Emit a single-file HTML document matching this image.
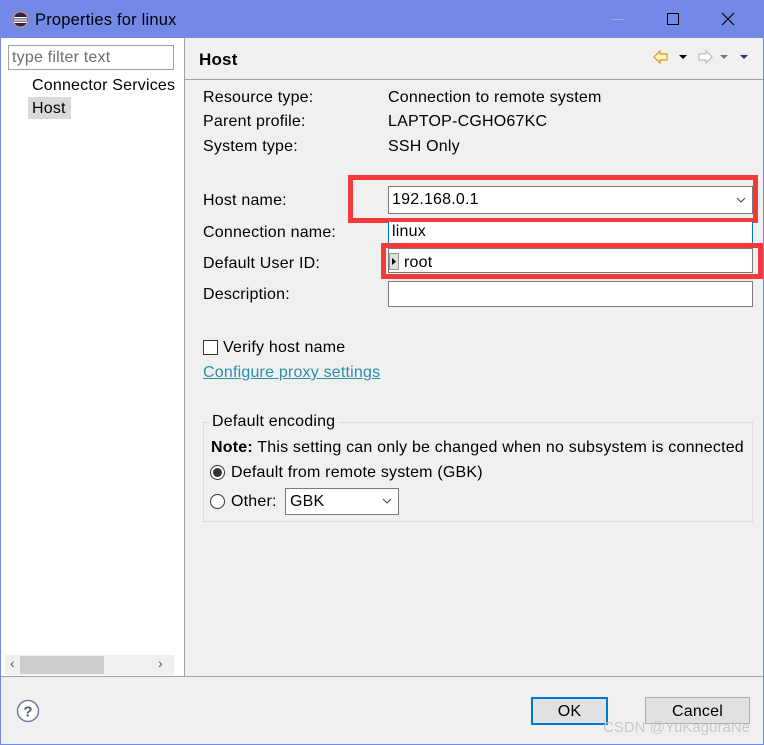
<!DOCTYPE html>
<html><head><meta charset="utf-8"><style>
*{margin:0;padding:0;box-sizing:border-box}
body{width:764px;height:745px;overflow:hidden;font-family:"Liberation Sans",sans-serif;font-size:16px;letter-spacing:0.2px;color:#000;background:#f0f0f0;position:relative}
.a{position:absolute;white-space:nowrap}
.t{line-height:20px;margin-top:2px}
.f{position:absolute;background:#fff;border:1px solid #7a7a7a}
.r{position:absolute;border:5px solid #f23a3a}
</style></head><body>
<div class="a" style="left:0;top:0;width:764px;height:745px;border:1px solid #7389e8"></div>
<div class="a" style="left:0;top:0;width:764px;height:38px;background:#7389e8"></div>
<svg class="a" style="left:12px;top:11px" width="17" height="17" viewBox="0 0 17 17"><circle cx="8.5" cy="8.5" r="7.5" fill="#2c2255" stroke="#e0a040" stroke-width="1"/><rect x="2" y="6" width="13" height="1.4" fill="#fff"/><rect x="2" y="8.3" width="13" height="1.4" fill="#fff"/><rect x="2" y="10.6" width="13" height="1.4" fill="#fff"/></svg>
<div class="a t" style="left:35px;top:8px;font-size:16.5px">Properties for linux</div>
<div class="a" style="left:611px;top:19px;width:13px;height:1px;background:#9aa8ee"></div>
<div class="a" style="left:667px;top:13px;width:12px;height:12px;border:1px solid #000"></div>
<svg class="a" style="left:721px;top:12px" width="14" height="14"><path d="M1 1L13 13M13 1L1 13" stroke="#000" stroke-width="1.2"/></svg>
<!-- left panel -->
<div class="a" style="left:1px;top:38px;width:184px;height:638px;background:#fff;border-right:1px solid #a0a0a0"></div>
<div class="f" style="left:8px;top:45px;width:166px;height:25px;border-color:#a0a0a0"></div>
<div class="a t" style="left:12px;top:46px;color:#6d6d6d">type filter text</div>
<div class="a t" style="left:32px;top:74px">Connector Services</div>
<div class="a" style="left:28px;top:97px;width:43px;height:22px;background:#d9d9d9"></div>
<div class="a t" style="left:32px;top:97px">Host</div>
<div class="a" style="left:5px;top:655px;width:169px;height:20px;background:#f0f0f0"></div>
<div class="a" style="left:20px;top:656px;width:84px;height:18px;background:#cdcdcd"></div>
<div class="a" style="left:10px;top:655px;font-size:14px;color:#555">&#8249;</div>
<div class="a" style="left:158px;top:655px;font-size:14px;color:#555">&#8250;</div>
<!-- header -->
<div class="a t" style="left:199px;top:48px;font-weight:bold;font-size:17px">Host</div>
<div class="a" style="left:185px;top:79px;width:578px;height:1px;background:#a0a0a0"></div>
<svg class="a" style="left:652px;top:48px" width="104" height="18"><path d="M2 9L8 3V6H15V12H8V15Z" fill="#fff3c0" stroke="#d89a20" stroke-width="1.2"/><path d="M27 7H35L31 11Z" fill="#000"/><path d="M60 9L54 3V6H47V12H54V15Z" fill="#fff" stroke="#bbb" stroke-width="1.2"/><path d="M68 7H76L72 11Z" fill="#777"/><path d="M88 7H96L92 11Z" fill="#4a2070"/></svg>
<!-- labels -->
<div class="a t" style="left:203px;top:86px">Resource type:</div>
<div class="a t" style="left:388px;top:86px">Connection to remote system</div>
<div class="a t" style="left:203px;top:110px">Parent profile:</div>
<div class="a t" style="left:388px;top:110px">LAPTOP-CGHO67KC</div>
<div class="a t" style="left:203px;top:135px">System type:</div>
<div class="a t" style="left:388px;top:135px">SSH Only</div>
<div class="a t" style="left:203px;top:189px">Host name:</div>
<div class="a t" style="left:203px;top:221px">Connection name:</div>
<div class="a t" style="left:203px;top:252px">Default User ID:</div>
<div class="a t" style="left:203px;top:283px">Description:</div>
<!-- fields -->
<div class="f" style="left:388px;top:186px;width:365px;height:28px"></div>
<div class="a t" style="left:392px;top:188px">192.168.0.1</div>
<svg class="a" style="left:736px;top:196px" width="10" height="8"><path d="M1 2L5 6L9 2" stroke="#444" fill="none"/></svg>
<div class="r" style="left:348px;top:175px;width:410px;height:48px"></div>
<div class="f" style="left:388px;top:222px;width:365px;height:26px;border-color:#0078d7;border-top:none"></div>
<div class="a t" style="left:392px;top:220px">linux</div>
<div class="f" style="left:388px;top:248px;width:365px;height:25px"></div>
<div class="a" style="left:389px;top:253px;width:10px;height:17px;background:#e0e0e0;border:1px solid #999"></div>
<svg class="a" style="left:391px;top:258px" width="6" height="7"><path d="M1 0L5 3.5L1 7Z" fill="#000"/></svg>
<div class="a t" style="left:404px;top:251px">root</div>
<div class="r" style="left:381px;top:243px;width:382px;height:36px"></div>
<div class="f" style="left:388px;top:281px;width:365px;height:26px"></div>
<!-- checkbox -->
<div class="a" style="left:203px;top:340px;width:15px;height:15px;background:#fff;border:1px solid #333"></div>
<div class="a t" style="left:223px;top:336px">Verify host name</div>
<div class="a t" style="left:203px;top:361px;color:#2a8fa8;text-decoration:underline">Configure proxy settings</div>
<!-- group -->
<div class="a" style="left:203px;top:422px;width:550px;height:100px;border:1px solid #dcdcdc"></div>
<div class="a t" style="left:209px;top:410px;background:#f0f0f0;padding:0 3px">Default encoding</div>
<div class="a t" style="left:211px;top:436px"><b>Note:</b> This setting can only be changed when no subsystem is connected</div>
<div class="a" style="left:210px;top:465px;width:15px;height:15px;border-radius:50%;border:1px solid #333;background:#fff"></div>
<div class="a" style="left:213px;top:468px;width:9px;height:9px;border-radius:50%;background:#333"></div>
<div class="a t" style="left:231px;top:461px">Default from remote system (GBK)</div>
<div class="a" style="left:210px;top:494px;width:15px;height:15px;border-radius:50%;border:1px solid #333;background:#fff"></div>
<div class="a t" style="left:231px;top:490px">Other:</div>
<div class="f" style="left:285px;top:488px;width:114px;height:27px"></div>
<div class="a t" style="left:290px;top:490px">GBK</div>
<svg class="a" style="left:382px;top:497px" width="10" height="8"><path d="M1 2L5 6L9 2" stroke="#444" fill="none"/></svg>
<!-- bottom -->
<div class="a" style="left:1px;top:676px;width:762px;height:1px;background:#a0a0a0"></div>
<svg class="a" style="left:16px;top:699px" width="24" height="24"><circle cx="12" cy="12" r="10.5" fill="#fff" stroke="#6b7a99" stroke-width="1.4"/><text x="12" y="17.5" text-anchor="middle" font-family="Liberation Sans" font-weight="bold" font-size="15" fill="#4a5a7a">?</text></svg>
<div class="a" style="left:531px;top:697px;width:77px;height:28px;background:#e1e1e1;border:2px solid #0078d7"></div>
<div class="a t" style="left:531px;top:700px;width:77px;text-align:center">OK</div>
<div class="a" style="left:645px;top:697px;width:105px;height:27px;background:#e1e1e1;border:1px solid #adadad"></div>
<div class="a t" style="left:645px;top:700px;width:105px;text-align:center">Cancel</div>
<div class="a t" style="left:603px;top:716px;color:#c8c8c8;font-size:15px;letter-spacing:0">CSDN @YuKaguraNe</div>
</body></html>
